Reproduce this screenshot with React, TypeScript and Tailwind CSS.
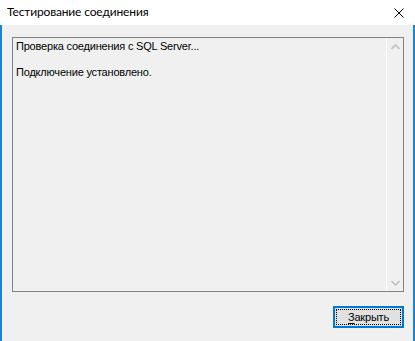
import React from 'react';

const ChevronUp = () => (
  <svg width="9" height="6" viewBox="0 0 9 6" className="block">
    <path d="M0.5 5 L4.5 1 L8.5 5" fill="none" stroke="#c0c0c0" strokeWidth="1.6" />
  </svg>
);

const ChevronDown = () => (
  <svg width="9" height="6" viewBox="0 0 9 6" className="block">
    <path d="M0.5 1 L4.5 5 L8.5 1" fill="none" stroke="#c0c0c0" strokeWidth="1.6" />
  </svg>
);

export default function App() {
  return (
    <div className="w-[415px] h-[341px] flex flex-col bg-[#f0f0f0] font-['Liberation_Sans',Arial,sans-serif] text-black">
      {/* title bar */}
      <div className="h-[25px] bg-white flex items-center justify-between pl-[7px] pr-[11px]">
        <span className="text-[12px] leading-none font-['Lato',sans-serif] tracking-[-0.15px] pb-[1px]">Тестирование соединения</span>
        <svg width="10" height="10" viewBox="0 0 10 10" className="block mt-[1px]">
          <path d="M0.5 0.5 L9.5 9.5 M9.5 0.5 L0.5 9.5" stroke="#000" strokeWidth="1" />
        </svg>
      </div>

      {/* body */}
      <div className="flex-1 flex flex-col border-x-2 border-[#1883d7] pl-[10px] pr-[9px] pt-[12px]">
        <div className="h-[255px] flex border border-[#828282] bg-[#f0f0f0]">
          <div className="flex-1 pl-[3px] pt-[2px] text-[11px] leading-[13px] tracking-[-0.2px]">
            <div>Проверка соединения с SQL Server...</div>
            <div>&nbsp;</div>
            <div>Подключение установлено.</div>
          </div>
          <div className="w-[17px] flex flex-col justify-between border-l border-[#fcfcfc]">
            <div className="h-[17px] flex items-center justify-center">
              <ChevronUp />
            </div>
            <div className="h-[17px] flex items-center justify-center">
              <ChevronDown />
            </div>
          </div>
        </div>

        <div className="flex justify-end mt-[14px]">
          <button className="w-[71px] h-[22px] border-2 border-[#0078d7] bg-[#e1e1e1] p-[1px]">
            <div className="w-full h-full border border-dotted border-black flex items-center justify-center text-[11px] leading-none tracking-[-0.2px]">
              <span>
                <span className="underline underline-offset-[2px]">З</span>акрыть
              </span>
            </div>
          </button>
        </div>
      </div>
    </div>
  );
}
